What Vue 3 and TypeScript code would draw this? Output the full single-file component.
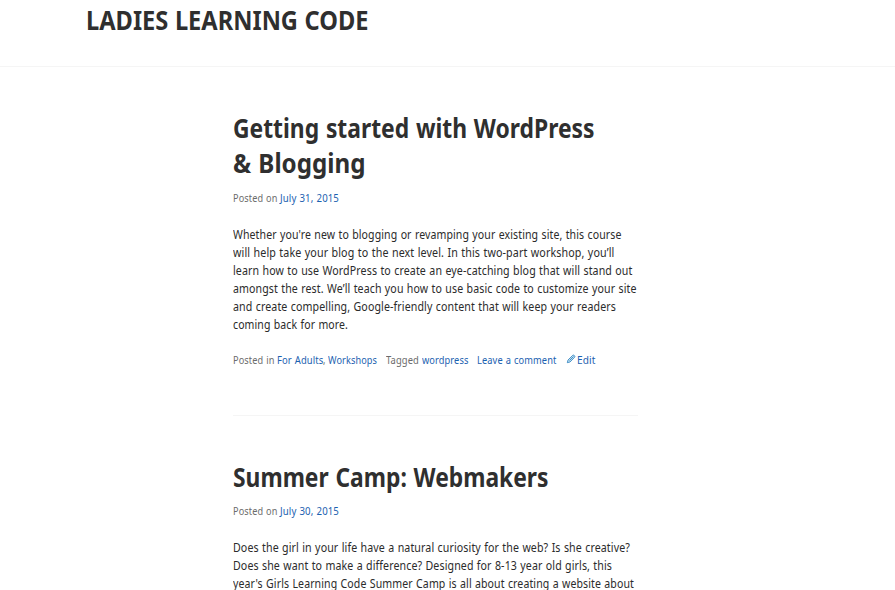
<script setup lang="ts">
import type { Directive } from 'vue'

interface Line { text: string; width: number }
interface Piece extends Line { link?: boolean; gap?: number; icon?: boolean }
interface Post { title: Line[]; meta: Piece[]; body: Line[]; footer: Piece[] }

const siteTitle: Line = { text: 'LADIES LEARNING CODE', width: 282.5 }

const posts: Post[] = [
  {
    title: [
      { text: 'Getting started with WordPress', width: 361.5 },
      { text: '& Blogging', width: 132.5 },
    ],
    meta: [
      { text: 'Posted on', width: 44.5 },
      { text: 'July 31, 2015', width: 59, link: true, gap: 2.5 },
    ],
    body: [
      { text: "Whether you're new to blogging or revamping your existing site, this course", width: 388.5 },
      { text: 'will help take your blog to the next level. In this two-part workshop, you’ll', width: 381.5 },
      { text: 'learn how to use WordPress to create an eye-catching blog that will stand out', width: 399.5 },
      { text: 'amongst the rest. We’ll teach you how to use basic code to customize your site', width: 403.5 },
      { text: 'and create compelling, Google-friendly content that will keep your readers', width: 383 },
      { text: 'coming back for more.', width: 115 },
    ],
    footer: [
      { text: 'Posted in', width: 41.5 },
      { text: 'For Adults', width: 46.5, link: true, gap: 2.5 },
      { text: ',', width: 2.5 },
      { text: 'Workshops', width: 49, link: true, gap: 2.5 },
      { text: 'Tagged', width: 33, gap: 8.5 },
      { text: 'wordpress', width: 46.5, link: true, gap: 3 },
      { text: 'Leave a comment', width: 79.5, link: true, gap: 8.7 },
      { text: 'Edit', width: 18.5, link: true, icon: true },
    ],
  },
  {
    title: [{ text: 'Summer Camp: Webmakers', width: 315.5 }],
    meta: [
      { text: 'Posted on', width: 44.5 },
      { text: 'July 30, 2015', width: 59, link: true, gap: 2.5 },
    ],
    body: [
      { text: 'Does the girl in your life have a natural curiosity for the web? Is she creative?', width: 397 },
      { text: 'Does she want to make a difference? Designed for 8-13 year old girls, this', width: 379 },
      { text: "year's Girls Learning Code Summer Camp is all about creating a website about", width: 401 },
    ],
    footer: [],
  },
]

// Condenses a run of text to the measure it is given.
const vFit: Directive<HTMLElement, number> = {
  mounted(el, { value }) {
    el.style.transform = `scaleX(${value / el.getBoundingClientRect().width})`
  },
}
</script>

<template>
  <div class="page">
    <header class="site-header">
      <h1 class="site-title"><span v-fit="siteTitle.width" class="run">{{ siteTitle.text }}</span></h1>
    </header>
    <main class="content">
      <article v-for="(post, i) in posts" :key="i" class="post">
        <h2 class="entry-title">
          <span v-for="l in post.title" :key="l.text" class="line"><span v-fit="l.width" class="run">{{ l.text }}</span></span>
        </h2>
        <div class="meta">
          <component
            :is="p.link ? 'a' : 'span'" v-for="p in post.meta" :key="p.text" class="piece"
            :style="{ width: p.width + 'px', marginLeft: (p.gap ?? 0) + 'px' }"
          ><span v-fit="p.width" class="run">{{ p.text }}</span></component>
        </div>
        <p class="entry">
          <span v-for="l in post.body" :key="l.text" class="line"><span v-fit="l.width" class="run">{{ l.text }}</span></span>
        </p>
        <footer v-if="post.footer.length" class="meta entry-footer">
          <template v-for="p in post.footer" :key="p.text">
            <svg v-if="p.icon" class="pencil" viewBox="0 0 10 10" width="10" height="10">
              <path d="M1.3 8.7 2 6 6.7 1.3Q7.5.7 8.4 1.6 9.3 2.5 8.6 3.3L4 8ZM3.6 6.4 7.5 2.5" />
            </svg>
            <component
              :is="p.link ? 'a' : 'span'" class="piece"
              :style="{ width: p.width + 'px', marginLeft: (p.gap ?? 0) + 'px' }"
            ><span v-fit="p.width" class="run">{{ p.text }}</span></component>
          </template>
        </footer>
      </article>
    </main>
  </div>
</template>

<style>
body { background: #fff; }
</style>

<style scoped>
.page {
  height: 590px;
  overflow: hidden;
  font-family: "Noto Sans", "Open Sans", sans-serif;
  font-size: 11.8px;
  line-height: 18px;
  letter-spacing: .12px;
  word-spacing: .5px;
  color: #2b2b2b;
}
.run {
  display: inline-block;
  white-space: nowrap;
  transform-origin: 0 50%;
}
.line { display: block; }
.site-header {
  box-sizing: border-box;
  height: 67px;
  padding: 2px 0 0 86px;
  border-bottom: 1px solid #f5f5f5;
}
.site-title, .entry-title {
  margin: 0;
  font-size: 27.5px;
  font-weight: 700;
  line-height: 35px;
  letter-spacing: 0;
  color: #2f2f2f;
}
.entry-title { word-spacing: 1px; }
.content { width: 405px; margin-left: 232.6px; }
.post { padding-top: 43px; }
.post + .post { border-top: 1px solid #f5f5f5; }
.meta {
  display: flex;
  height: 18px;
  margin-top: 9px;
  font-size: 10.3px;
  color: #6b6b6b;
}
.post + .post .meta { margin-top: 8px; }
.piece { flex: none; white-space: nowrap; }
a { color: #1b61b0; text-decoration: none; }
.entry { margin: 18px 0 0; }
.entry-footer { margin-top: 18px; padding-bottom: 46px; }
.pencil {
  flex: none;
  margin: 3px 1px 0 9.8px;
  fill: #bfe0f3;
  stroke: #287ebd;
  stroke-width: .8;
}
</style>
